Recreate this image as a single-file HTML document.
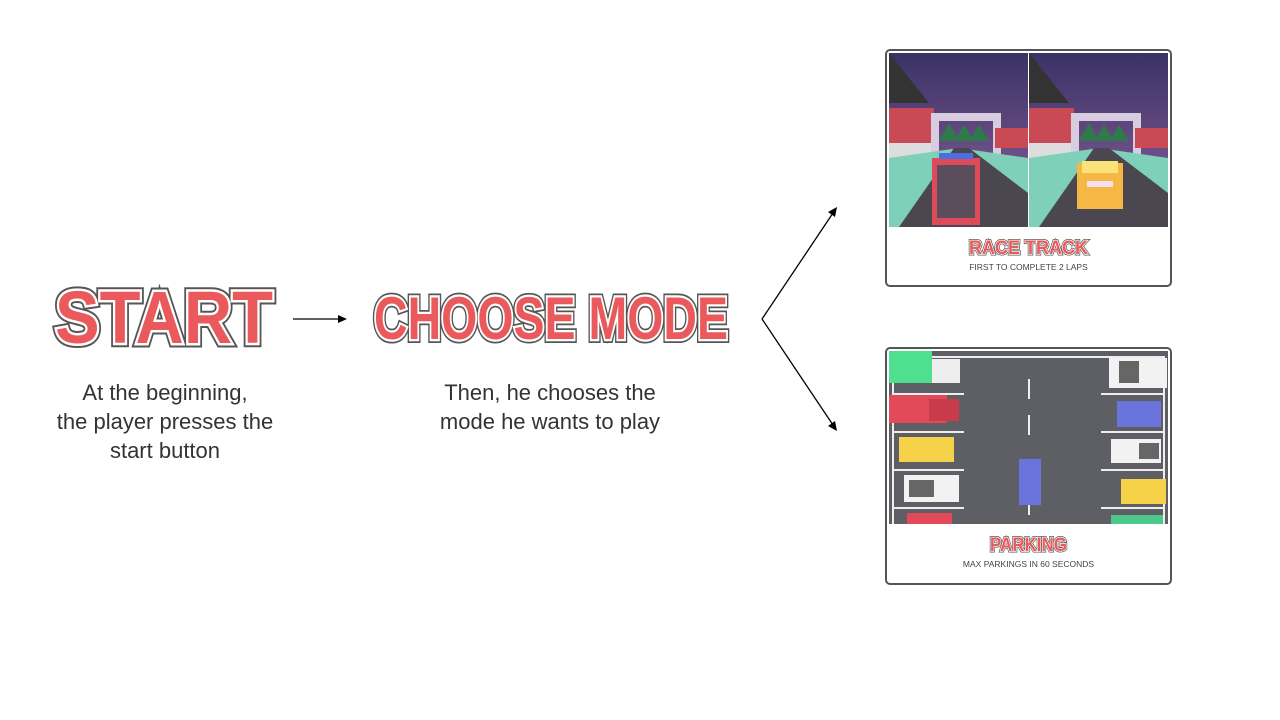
<!DOCTYPE html>
<html><head><meta charset="utf-8"><style>
html,body{margin:0;padding:0;background:#fff;width:1280px;height:720px;overflow:hidden;position:relative;font-family:"Liberation Sans",sans-serif}
.a{position:absolute}
.txt{position:absolute;text-align:center;font-size:22px;line-height:29px;color:#333;font-weight:300}
.card{position:absolute;left:885px;width:283px;height:234px;border:2px solid #555;border-radius:5px;background:#fff;overflow:hidden}
.sub{position:absolute;left:0;width:100%;text-align:center;font-size:8.5px;color:#444}
</style></head><body>
<svg class="a" style="left:0;top:0" width="1280" height="720">
<g font-family="Liberation Sans" font-weight="bold">
<text x="55" y="343" font-size="74" textLength="218" lengthAdjust="spacingAndGlyphs" fill="none" stroke="#555" stroke-width="9" stroke-linejoin="miter">START</text>
<text x="55" y="343" font-size="74" textLength="218" lengthAdjust="spacingAndGlyphs" fill="#ea5a5c" stroke="#fff" stroke-width="5">START</text>
<text x="55" y="343" font-size="74" textLength="218" lengthAdjust="spacingAndGlyphs" fill="#ea5a5c">START</text>
<text x="374" y="339" font-size="60" textLength="354" lengthAdjust="spacingAndGlyphs" fill="none" stroke="#555" stroke-width="8">CHOOSE MODE</text>
<text x="374" y="339" font-size="60" textLength="354" lengthAdjust="spacingAndGlyphs" fill="#ea5a5c" stroke="#fff" stroke-width="4.5">CHOOSE MODE</text>
<text x="374" y="339" font-size="60" textLength="354" lengthAdjust="spacingAndGlyphs" fill="#ea5a5c">CHOOSE MODE</text>
</g>
<line x1="293" y1="319" x2="340" y2="319" stroke="#000" stroke-width="1.3"/>
<polygon points="347,319 338,315 338,323" fill="#000"/>
<line x1="762" y1="319" x2="833" y2="213" stroke="#000" stroke-width="1.3"/>
<polygon points="837,207 828,212 835,217" fill="#000"/>
<line x1="762" y1="319" x2="833" y2="425" stroke="#000" stroke-width="1.3"/>
<polygon points="837,431 835,421 828,426" fill="#000"/>
</svg>
<div class="txt" style="left:30px;width:270px;top:378px">At the beginning,<br>the player presses the<br>start button</div>
<div class="txt" style="left:400px;width:300px;top:378px">Then, he chooses the<br>mode he wants to play</div>

<div class="card" style="top:49px">
<svg class="a" style="left:2px;top:2px" width="279" height="174">
<defs><linearGradient id="sky" x1="0" y1="0" x2="0" y2="1"><stop offset="0" stop-color="#3a3266"/><stop offset="0.6" stop-color="#6d4f86"/><stop offset="1" stop-color="#8a6a9a"/></linearGradient></defs>
<g id="scene">
<rect width="139" height="174" fill="url(#sky)"/>
<polygon points="0,0 40,50 0,50" fill="#333"/>
<rect x="0" y="55" width="45" height="45" fill="#c94a55"/>
<rect x="0" y="90" width="50" height="15" fill="#ddd"/>
<rect x="42" y="60" width="70" height="8" fill="#d8cde0"/>
<rect x="42" y="60" width="8" height="45" fill="#d8cde0"/>
<rect x="104" y="60" width="8" height="45" fill="#d8cde0"/>
<rect x="106" y="75" width="33" height="20" fill="#c94a55"/>
<polygon points="50,88 60,70 70,88" fill="#2f7a4a"/><polygon points="65,88 75,72 85,88" fill="#2f7a4a"/><polygon points="80,88 90,72 100,88" fill="#2f7a4a"/>
<polygon points="0,105 70,95 139,105 139,174 0,174" fill="#7fd0b8"/>
<polygon points="10,174 65,95 80,95 139,140 139,174" fill="#4a4750"/>
</g>
<use href="#scene" x="140"/>
<rect x="139" width="1" height="174" fill="#fff"/>
<rect x="43" y="105" width="48" height="67" fill="#de4a5a"/>
<rect x="48" y="112" width="38" height="53" fill="#5b4e5c"/>
<rect x="50" y="100" width="34" height="6" fill="#4a6fe0"/>
<rect x="188" y="110" width="46" height="46" fill="#f5b845"/>
<rect x="193" y="108" width="36" height="12" fill="#fbe27a"/>
<rect x="198" y="128" width="26" height="6" fill="#f7e0ee"/>
</svg>
<svg class="a" style="left:0;top:184px" width="283" height="24">
<g font-family="Liberation Sans" font-weight="bold">
<text x="82" y="19" font-size="19" textLength="119" lengthAdjust="spacingAndGlyphs" fill="#ea5a5c" stroke="#555" stroke-width="3">RACE TRACK</text>
<text x="82" y="19" font-size="19" textLength="119" lengthAdjust="spacingAndGlyphs" fill="#ea5a5c" stroke="#fff" stroke-width="1.5">RACE TRACK</text>
<text x="82" y="19" font-size="19" textLength="119" lengthAdjust="spacingAndGlyphs" fill="#ea5a5c">RACE TRACK</text></g>
</svg>
<div class="sub" style="top:211px">FIRST TO COMPLETE 2 LAPS</div>
</div>

<div class="card" style="top:347px">
<svg class="a" style="left:2px;top:2px" width="279" height="173">
<rect width="279" height="173" fill="#5e5f64"/>
<rect x="3" y="5" width="273" height="2" fill="#eee"/>
<rect x="3" y="5" width="2" height="168" fill="#eee"/><rect x="274" y="5" width="2" height="168" fill="#eee"/>
<g fill="#eee"><rect x="5" y="42" width="70" height="2"/><rect x="5" y="80" width="70" height="2"/><rect x="5" y="118" width="70" height="2"/><rect x="5" y="156" width="70" height="2"/>
<rect x="212" y="42" width="64" height="2"/><rect x="212" y="80" width="64" height="2"/><rect x="212" y="118" width="64" height="2"/><rect x="212" y="156" width="64" height="2"/>
<rect x="139" y="28" width="2" height="20"/><rect x="139" y="64" width="2" height="20"/><rect x="139" y="138" width="2" height="26"/></g>
<rect x="-2" y="0" width="45" height="32" fill="#4ee08e"/><rect x="43" y="8" width="28" height="24" fill="#eee"/>
<rect x="-2" y="44" width="60" height="28" fill="#e24a5a"/><rect x="40" y="48" width="30" height="22" fill="#c93a4a"/>
<rect x="10" y="86" width="55" height="25" fill="#f5d24a"/>
<rect x="15" y="124" width="55" height="27" fill="#f2f2f2"/><rect x="20" y="129" width="25" height="17" fill="#666"/>
<rect x="18" y="162" width="45" height="12" fill="#e24a5a"/>
<rect x="220" y="7" width="58" height="30" fill="#f2f2f2"/><rect x="230" y="10" width="20" height="22" fill="#666"/>
<rect x="228" y="50" width="44" height="26" fill="#6a74dc"/>
<rect x="222" y="88" width="50" height="24" fill="#f2f2f2"/><rect x="250" y="92" width="20" height="16" fill="#666"/>
<rect x="232" y="128" width="45" height="25" fill="#f5d24a"/>
<rect x="222" y="164" width="52" height="10" fill="#4ec88a"/>
<rect x="130" y="108" width="22" height="46" fill="#6a74dc"/>
</svg>
<svg class="a" style="left:0;top:183px" width="283" height="24">
<g font-family="Liberation Sans" font-weight="bold">
<text x="103" y="19" font-size="19" textLength="77" lengthAdjust="spacingAndGlyphs" fill="#ea5a5c" stroke="#555" stroke-width="3">PARKING</text>
<text x="103" y="19" font-size="19" textLength="77" lengthAdjust="spacingAndGlyphs" fill="#ea5a5c" stroke="#fff" stroke-width="1.5">PARKING</text>
<text x="103" y="19" font-size="19" textLength="77" lengthAdjust="spacingAndGlyphs" fill="#ea5a5c">PARKING</text></g>
</svg>
<div class="sub" style="top:210px">MAX PARKINGS IN 60 SECONDS</div>
</div>
</body></html>
